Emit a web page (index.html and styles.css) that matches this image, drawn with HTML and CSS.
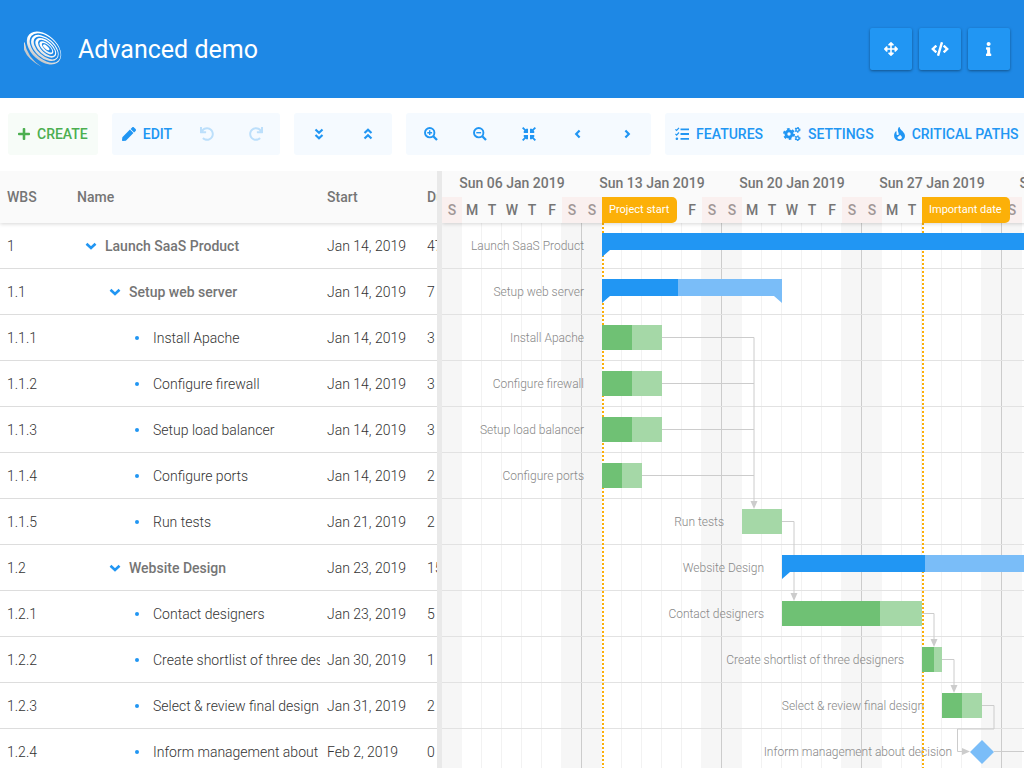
FILE: index.html
```html
<!DOCTYPE html>
<html lang="en">
<head>
<meta charset="utf-8">
<title>Advanced demo</title>
<link rel="stylesheet" href="styles.css">
</head>
<body>
<header class="topbar">
  <svg class="logo" viewBox="0 0 38 38" aria-hidden="true">
    <defs>
      <linearGradient id="silver" gradientUnits="userSpaceOnUse" x1="0" y1="-12" x2="4" y2="12">
        <stop offset="0.45" stop-color="#fff"/><stop offset="1" stop-color="#c8c8c8"/>
      </linearGradient>
    </defs>
    <g transform="translate(20 18) rotate(42)" fill="url(#silver)" fill-rule="evenodd">
      <path d="M-20 0a20 12.800 0 1 0 40 0a20 12.800 0 1 0 -40 0zM-17.500-.8a18.300 11 0 1 0 36.600 0a18.300 11 0 1 0 -36.600 0z"/>
      <path d="M-15.700-.6a16.300 9.700 0 1 0 32.600 0a16.300 9.700 0 1 0 -32.600 0zM-13.300-1.200a14.600 7.900 0 1 0 29.200 0a14.600 7.900 0 1 0 -29.200 0z"/>
      <path d="M-11.400-1.300a12.600 6.800 0 1 0 25.200 0a12.600 6.800 0 1 0 -25.200 0zM-8.700-1.800a10.600 5.100 0 1 0 21.200 0a10.600 5.100 0 1 0 -21.200 0z"/>
      <path d="M-7-1.800a8.600 4.100 0 1 0 17.200 0a8.600 4.100 0 1 0 -17.200 0zM-4.500-2.200a6.600 2.600 0 1 0 13.200 0a6.600 2.600 0 1 0 -13.200 0z"/>
      <path d="M-2.800-2a4 1.600 0 1 0 8 0a4 1.600 0 1 0 -8 0z"/>
      <path d="M-17.500 12.500Q-6 20.500 11 15.500Q-6 18.500 -18.500 8.500z"/>
    </g>
  </svg>
  <h1 class="title">Advanced demo</h1>
  <div class="actions">
    <button class="action" type="button" aria-label="Fullscreen"><svg class="icon" viewBox="0 0 512 512"><path d="M352.201 425.775l-79.196 79.196c-9.373 9.373-24.568 9.373-33.941 0l-79.196-79.196c-15.119-15.119-4.411-40.971 16.971-40.970h51.162L228 284H127.196v51.162c0 21.382-25.851 32.090-40.971 16.971L7.029 272.937c-9.373-9.373-9.373-24.569 0-33.941L86.225 159.800c15.119-15.119 40.971-4.411 40.971 16.971V228H228V127.196h-51.230c-21.382 0-32.090-25.851-16.971-40.971l79.196-79.196c9.373-9.373 24.568-9.373 33.941 0l79.196 79.196c15.119 15.119 4.411 40.971-16.971 40.971h-51.162V228h100.804v-51.162c0-21.382 25.851-32.090 40.970-16.971l79.196 79.196c9.373 9.373 9.373 24.569 0 33.941L425.773 352.200c-15.119 15.119-40.971 4.411-40.970-16.971V284H284v100.804h51.230c21.382 0 32.090 25.851 16.971 40.971z"/></svg></button>
    <button class="action" type="button" aria-label="Code editor"><svg class="icon icon-code" viewBox="0 0 640 512"><path d="M278.900 511.500l-61-17.700c-6.400-1.800-10-8.500-8.200-14.900L346.200 8.700c1.800-6.400 8.500-10 14.900-8.200l61 17.700c6.400 1.800 10 8.500 8.200 14.900L293.800 503.300c-1.900 6.400-8.500 10.100-14.900 8.200zm-114-112.200l43.500-46.400c4.600-4.900 4.300-12.700-.8-17.200L117 256l90.600-79.700c5.100-4.500 5.500-12.300.8-17.200l-43.500-46.400c-4.500-4.800-12.100-5.100-17-.5L3.800 247.200c-5.100 4.700-5.100 12.800 0 17.500l144.100 135.100c4.900 4.600 12.500 4.400 17-.5zm327.200.6l144.100-135.100c5.100-4.700 5.100-12.800 0-17.500L492.100 112.100c-4.800-4.500-12.400-4.300-17 .5L431.600 159c-4.600 4.900-4.300 12.700.8 17.200L523 256l-90.600 79.700c-5.100 4.500-5.500 12.300-.8 17.200l43.500 46.400c4.500 4.900 12.100 5.100 17 .6z"/></svg></button>
    <button class="action" type="button" aria-label="Information"><svg class="icon" viewBox="0 0 192 512"><path d="M20 424.229h20V279.771H20c-11.046 0-20-8.954-20-20V212c0-11.046 8.954-20 20-20h112c11.046 0 20 8.954 20 20v212.229h20c11.046 0 20 8.954 20 20V492c0 11.046-8.954 20-20 20H20c-11.046 0-20-8.954-20-20v-47.771c0-11.046 8.954-20 20-20zM96 0C56.235 0 24 32.235 24 72s32.235 72 72 72 72-32.235 72-72S135.764 0 96 0z"/></svg></button>
  </div>
</header>

<nav class="toolbar" aria-label="Tools">
  <div class="group group-green">
    <button class="tool" type="button"><svg class="icon icon-plus" viewBox="0 0 448 512"><path d="M416 208H272V64c0-17.670-14.330-32-32-32h-32c-17.670 0-32 14.330-32 32v144H32c-17.670 0-32 14.330-32 32v32c0 17.670 14.330 32 32 32h144v144c0 17.670 14.330 32 32 32h32c17.670 0 32-14.330 32-32V304h144c17.670 0 32-14.330 32-32v-32c0-17.670-14.330-32-32-32z"/></svg>CREATE</button>
  </div>
  <div class="group">
    <button class="tool" type="button"><svg class="icon" viewBox="0 0 512 512"><path d="M290.740 93.240l128.020 128.020-277.990 277.990-114.140 12.600C11.350 513.540-1.560 500.620.14 485.340l12.700-114.220 277.900-277.880zm207.200-19.060l-60.110-60.110c-18.750-18.750-49.160-18.750-67.910 0l-56.550 56.550 128.020 128.020 56.550-56.550c18.750-18.760 18.750-49.160 0-67.910z"/></svg>EDIT</button>
    <button class="tool tool-icon" type="button" disabled aria-label="Undo"><svg class="icon" viewBox="0 0 512 512"><path d="M212.333 224.333H12c-6.627 0-12-5.373-12-12V12C0 5.373 5.373 0 12 0h48c6.627 0 12 5.373 12 12v78.112C117.773 39.279 184.260 7.470 258.175 8.007c136.906.994 246.448 111.623 246.157 248.532C504.041 393.258 393.120 504 256.333 504c-64.089 0-122.496-24.313-166.510-64.215-5.099-4.622-5.334-12.554-.467-17.420l33.967-33.967c4.474-4.474 11.662-4.717 16.401-.525C170.760 415.336 211.580 432 256.333 432c97.268 0 176-78.716 176-176 0-97.267-78.716-176-176-176-58.496 0-110.280 28.476-142.274 72.333h98.274c6.627 0 12 5.373 12 12v48c0 6.627-5.373 12-12 12z"/></svg></button>
    <button class="tool tool-icon" type="button" disabled aria-label="Redo"><svg class="icon" viewBox="0 0 512 512"><path transform="translate(512 0) scale(-1 1)" d="M212.333 224.333H12c-6.627 0-12-5.373-12-12V12C0 5.373 5.373 0 12 0h48c6.627 0 12 5.373 12 12v78.112C117.773 39.279 184.260 7.470 258.175 8.007c136.906.994 246.448 111.623 246.157 248.532C504.041 393.258 393.120 504 256.333 504c-64.089 0-122.496-24.313-166.510-64.215-5.099-4.622-5.334-12.554-.467-17.420l33.967-33.967c4.474-4.474 11.662-4.717 16.401-.525C170.760 415.336 211.580 432 256.333 432c97.268 0 176-78.716 176-176 0-97.267-78.716-176-176-176-58.496 0-110.280 28.476-142.274 72.333h98.274c6.627 0 12 5.373 12 12v48c0 6.627-5.373 12-12 12z"/></svg></button>
  </div>
  <div class="group">
    <button class="tool tool-icon" type="button" aria-label="Expand all"><svg class="icon line" viewBox="0 0 14 14"><path d="M3.500 2.500L7 5.700l3.500-3.200M3.500 8L7 11.200 10.500 8"/></svg></button>
    <button class="tool tool-icon" type="button" aria-label="Collapse all"><svg class="icon line" viewBox="0 0 14 14"><path d="M3.500 6L7 2.800 10.500 6M3.500 11.500L7 8.300l3.500 3.200"/></svg></button>
  </div>
  <div class="group">
    <button class="tool tool-icon" type="button" aria-label="Zoom in"><svg class="icon line" viewBox="0 0 14 14"><circle cx="5.700" cy="5.700" r="4.700" stroke-width="1.900"/><path d="M9.300 9.300l3.700 3.700" stroke-width="2.300"/><path d="M3.300 5.700h4.800M5.700 3.300v4.800" stroke-width="1.400"/></svg></button>
    <button class="tool tool-icon" type="button" aria-label="Zoom out"><svg class="icon line" viewBox="0 0 14 14"><circle cx="5.700" cy="5.700" r="4.700" stroke-width="1.900"/><path d="M9.300 9.300l3.700 3.700" stroke-width="2.300"/><path d="M3.300 5.700h4.800" stroke-width="1.400"/></svg></button>
    <button class="tool tool-icon" type="button" aria-label="Zoom to fit"><svg class="icon" viewBox="0 0 14 14"><path d="M1.300 0L3.600 2.300 5 1.500 6 2V6H2L1.500 5 2.300 3.600 0 1.300zM12.700 0L10.400 2.300 9 1.500 8 2V6H12L12.500 5 11.700 3.600 14 1.300zM1.300 14L3.600 11.700 5 12.500 6 12V8H2L1.500 9 2.300 10.400 0 12.700zM12.700 14L10.400 11.700 9 12.500 8 12V8H12L12.500 9 11.700 10.400 14 12.700z"/></svg></button>
    <button class="tool tool-icon" type="button" aria-label="Previous"><svg class="icon line" viewBox="0 0 14 14"><path d="M8.600 3.500L5.200 7l3.400 3.500"/></svg></button>
    <button class="tool tool-icon" type="button" aria-label="Next"><svg class="icon line" viewBox="0 0 14 14"><path d="M5.400 3.500L8.800 7l-3.400 3.500"/></svg></button>
  </div>
  <div class="group">
    <button class="tool" type="button"><svg class="icon line" viewBox="0 0 14 14"><path stroke-width="1.800" d="M5.500 2.400H14M5.500 7H14M5.500 11.800H14"/><path stroke-width="1.200" d="M.4 2.300l1.200 1.200L4 .9M.4 6.900l1.200 1.200L4 5.500"/><circle cx="1.900" cy="11.800" r=".7" stroke-width="1.200"/></svg>FEATURES</button>
    <button class="tool" type="button"><svg class="icon icon-cogs line" viewBox="0 0 18 14"><circle cx="6" cy="7" r="3.100" stroke-width="2.800"/><circle cx="6" cy="7" r="5" stroke-width="2" stroke-dasharray="2.620 2.616"/><circle cx="14.500" cy="2.800" r="1.600" stroke-width="1.300"/><circle cx="14.500" cy="2.800" r="2.400" stroke-width="1.100" stroke-dasharray="1.260 1.253"/><circle cx="14.500" cy="11.200" r="1.600" stroke-width="1.300"/><circle cx="14.500" cy="11.200" r="2.400" stroke-width="1.100" stroke-dasharray="1.260 1.253"/></svg>SETTINGS</button>
    <button class="tool" type="button"><svg class="icon icon-fire" viewBox="0 0 11 14"><path fill-rule="evenodd" d="M5.600 0C6 3.200 11 4.800 11 9a5.400 5 0 0 1-10.900 0C0 6.700 1 5.100 1.900 4.300c.3-.2.600 0 .6.300v2.300c0 1.500 2.200 1.600 2.200 0C4.700 5 2.800 3.800 4.600.4 4.900 0 5.500-.2 5.600 0zM6 7.700C5.900 9 3.400 9.200 3.400 10.500c.1 1.300 1.200 1.800 2.300 1.700 1.300 0 2.200-.7 2.200-1.800C7.900 9.200 7 8.600 6 7.700z"/></svg>CRITICAL PATHS</button>
  </div>
</nav>

<main class="gantt">
  <section class="grid-panel" aria-label="Tasks">
    <table class="tasks">
      <colgroup><col class="col-wbs"><col class="col-name"><col class="col-start"><col class="col-duration"></colgroup>
      <thead><tr><th>WBS</th><th>Name</th><th>Start</th><th>Duration</th></tr></thead>
      <tbody>
        <tr><td>1</td><td><div class="node parent level-1"><svg class="toggle" viewBox="0 0 12 12"><path d="M1.500 3.800L6 8l4.500-4.200"/></svg>Launch SaaS Product</div></td><td>Jan 14, 2019</td><td>47 days</td></tr>
        <tr><td>1.1</td><td><div class="node parent level-2"><svg class="toggle" viewBox="0 0 12 12"><path d="M1.500 3.800L6 8l4.500-4.200"/></svg>Setup web server</div></td><td>Jan 14, 2019</td><td>7 days</td></tr>
        <tr><td>1.1.1</td><td><div class="node leaf">Install Apache</div></td><td>Jan 14, 2019</td><td>3 days</td></tr>
        <tr><td>1.1.2</td><td><div class="node leaf">Configure firewall</div></td><td>Jan 14, 2019</td><td>3 days</td></tr>
        <tr><td>1.1.3</td><td><div class="node leaf">Setup load balancer</div></td><td>Jan 14, 2019</td><td>3 days</td></tr>
        <tr><td>1.1.4</td><td><div class="node leaf">Configure ports</div></td><td>Jan 14, 2019</td><td>2 days</td></tr>
        <tr><td>1.1.5</td><td><div class="node leaf">Run tests</div></td><td>Jan 21, 2019</td><td>2 days</td></tr>
        <tr><td>1.2</td><td><div class="node parent level-2"><svg class="toggle" viewBox="0 0 12 12"><path d="M1.500 3.800L6 8l4.500-4.200"/></svg>Website Design</div></td><td>Jan 23, 2019</td><td>15 days</td></tr>
        <tr><td>1.2.1</td><td><div class="node leaf">Contact designers</div></td><td>Jan 23, 2019</td><td>5 days</td></tr>
        <tr><td>1.2.2</td><td><div class="node leaf">Create shortlist of three designers</div></td><td>Jan 30, 2019</td><td>1 day</td></tr>
        <tr><td>1.2.3</td><td><div class="node leaf">Select &amp; review final design</div></td><td>Jan 31, 2019</td><td>2 days</td></tr>
        <tr><td>1.2.4</td><td><div class="node leaf">Inform management about decision</div></td><td>Feb 2, 2019</td><td>0 days</td></tr>
      </tbody>
    </table>
  </section>
  <div class="splitter" role="separator"></div>
  <section class="timeline" aria-label="Schedule">
    <div class="time-head">
      <div class="week"><div class="week-name">Sun 06 Jan 2019</div><span class="off">S</span><span>M</span><span>T</span><span>W</span><span>T</span><span>F</span><span class="off">S</span></div>
      <div class="week"><div class="week-name">Sun 13 Jan 2019</div><span class="off">S</span><span></span><span></span><span></span><span></span><span>F</span><span class="off">S</span></div>
      <div class="week"><div class="week-name">Sun 20 Jan 2019</div><span class="off">S</span><span>M</span><span>T</span><span>W</span><span>T</span><span>F</span><span class="off">S</span></div>
      <div class="week"><div class="week-name">Sun 27 Jan 2019</div><span class="off">S</span><span>M</span><span>T</span><span></span><span></span><span></span><span class="off"></span></div>
      <div class="week"><div class="week-name">Sun 03 Feb 2019</div><span class="off">S</span><span>M</span><span>T</span><span>W</span><span>T</span><span>F</span><span class="off">S</span></div>
      <div class="flag" style="left:160px">Project start</div>
      <div class="flag" style="left:480px">Important date</div>
    </div>
    <div class="time-body">
      <div class="row"><div class="item" style="left:160px"><span class="label">Launch SaaS Product</span><div class="bar summary" style="width:940px;--done:600px"></div></div></div>
      <div class="row"><div class="item" style="left:160px"><span class="label">Setup web server</span><div class="bar summary" style="width:180px;--done:76px"></div></div></div>
      <div class="row"><div class="item" style="left:160px"><span class="label">Install Apache</span><div class="bar task" style="width:60px;--done:30px"></div></div></div>
      <div class="row"><div class="item" style="left:160px"><span class="label">Configure firewall</span><div class="bar task" style="width:60px;--done:30px"></div></div></div>
      <div class="row"><div class="item" style="left:160px"><span class="label">Setup load balancer</span><div class="bar task" style="width:60px;--done:30px"></div></div></div>
      <div class="row"><div class="item" style="left:160px"><span class="label">Configure ports</span><div class="bar task" style="width:40px;--done:20px"></div></div></div>
      <div class="row"><div class="item" style="left:300px"><span class="label">Run tests</span><div class="bar task" style="width:40px;--done:0px"></div></div></div>
      <div class="row"><div class="item" style="left:340px"><span class="label">Website Design</span><div class="bar summary" style="width:420px;--done:143px"></div></div></div>
      <div class="row"><div class="item" style="left:340px"><span class="label">Contact designers</span><div class="bar task" style="width:140px;--done:98px"></div></div></div>
      <div class="row"><div class="item" style="left:480px"><span class="label">Create shortlist of three designers</span><div class="bar task" style="width:20px;--done:12px"></div></div></div>
      <div class="row"><div class="item" style="left:500px"><span class="label">Select &amp; review final design</span><div class="bar task" style="width:40px;--done:20px"></div></div></div>
      <div class="row"><div class="item" style="left:528px"><span class="label">Inform management about decision</span><svg class="milestone" viewBox="0 0 24 24"><path d="M12 0l12 12-12 12L0 12z"/></svg></div></div>
      <svg class="links" width="700" height="552" viewBox="0 0 700 552" aria-hidden="true">
        <g class="wire">
          <path d="M220 114.500H312V279"/><path d="M220 160.500H312M220 206.500H312M200 252.500H312"/>
          <path d="M340 298.500H352V371"/><path d="M480 390.500H492V417"/><path d="M500 436.500H512V463"/>
          <path d="M540 482.500H552V506H515.500V528.500H521"/><path d="M552 528.500H700"/>
        </g>
        <path class="tip" d="M308.500 278h7l-3.500 8zM348.500 370h7l-3.500 8zM488.500 416h7l-3.500 8zM508.500 462h7l-3.500 8zM520 525v7l8-3.500z"/>
      </svg>
      <div class="marker" style="left:160px"></div>
      <div class="marker" style="left:480px"></div>
    </div>
  </section>
</main>
</body>
</html>
```
FILE: styles.css
```css
* { box-sizing: border-box; }

body {
  margin: 0;
  height: 100vh;
  display: flex;
  flex-direction: column;
  overflow: hidden;
  background: #fff;
  color: #333;
  font: 300 14px/20px Roboto, "Liberation Sans", sans-serif;
}

button {
  margin: 0;
  border: 0;
  background: none;
  color: inherit;
  font: inherit;
}

.icon { display: block; height: 14px; fill: currentColor; }
.icon.line { fill: none; stroke: currentColor; stroke-width: 2.2; }
.icon-code { width: 18px; }
.icon-plus { width: 12px; }

/* Header */
.topbar {
  flex: none;
  display: flex;
  align-items: center;
  padding: 28px 14px 28px 24px;
  background: #1e88e5;
  color: #fff;
}
.logo { width: 38px; height: 38px; margin-right: 16px; }
.title { margin: 0; padding-top: 2px; font-size: 25px; line-height: 32px; font-weight: 400; }
.actions { display: flex; gap: 7px; margin-left: auto; }
.action {
  width: 42px;
  height: 42px;
  display: flex;
  align-items: center;
  justify-content: center;
  padding: 0;
  border-radius: 2px;
  background: #2196f3;
  box-shadow: 0 1px 3px rgba(0, 0, 0, .4);
}

/* Toolbar */
.toolbar {
  flex: none;
  display: flex;
  gap: 14px;
  padding: 15px 8px 16px;
  color: #2196f3;
  font-weight: 500;
}
.group { flex: none; display: flex; border-radius: 3px; background: #f5faff; }
.group-green { background: #f7fcf8; color: #4caf50; }
.tool {
  height: 42px;
  display: flex;
  align-items: center;
  gap: 7px;
  padding: 0 10px;
  white-space: nowrap;
}
.tool-icon { width: 49px; justify-content: center; padding: 0; }
.tool:disabled { color: #bcdffb; }

/* Task table */
.gantt { flex: 1; min-height: 0; display: flex; overflow: hidden; }
.grid-panel { flex: 0 0 437px; overflow: hidden; }
.tasks { width: 520px; table-layout: fixed; border-spacing: 0; }
.col-wbs { width: 70px; }
.col-name { width: 250px; }
.col-start { width: 100px; }
.col-duration { width: 100px; }
.tasks th, .tasks td { padding: 0 0 0 7px; text-align: left; white-space: nowrap; }
.tasks th { height: 52px; background: #fafafa; color: #757575; font-weight: 500; }
.tasks thead { box-shadow: 0 1px 4px rgba(0, 0, 0, .16); }
.tasks td { height: 46px; border-bottom: 1px solid #ddd; }
.node { display: flex; align-items: center; overflow: hidden; }
.parent { gap: 8px; color: #757575; font-weight: 500; }
.level-1 { padding-left: 8px; }
.level-2 { padding-left: 32px; }
.leaf { gap: 14px; padding-left: 58px; }
.leaf::before { content: ""; flex: none; width: 4px; height: 4px; border-radius: 50%; background: #2196f3; }
.toggle { flex: none; width: 12px; height: 12px; fill: none; stroke: #2196f3; stroke-width: 2.6; }

.splitter { flex: 0 0 5px; background: #e9e9e9; z-index: 2; }

/* Schedule */
.timeline { flex: 1; min-width: 0; overflow: hidden; }
.time-head {
  position: relative;
  z-index: 4;
  display: flex;
  width: 700px;
  background: #fafafa;
  color: #757575;
  font-weight: 500;
  box-shadow: 0 1px 4px rgba(0, 0, 0, .16);
}
.week { flex: none; width: 140px; display: grid; grid-template: 26px 26px / repeat(7, 20px); text-align: center; line-height: 26px; }
.week-name { grid-column: 1 / -1; line-height: 24px; }
.off { background: #faf0ef; color: #a19796; }
.flag {
  position: absolute;
  bottom: 0;
  padding: 0 8px 0 7px;
  border-radius: 0 5px 5px 0;
  background: #fcb008;
  color: #fff;
  font-size: 11px;
  line-height: 26px;
  font-weight: 400;
}
.time-body {
  position: relative;
  width: 700px;
  background: repeating-linear-gradient(to right,
    #f6f6f6 0 20px, #fff 20px 39px, #f2f2f2 39px 40px, #fff 40px 59px, #f2f2f2 59px 60px,
    #fff 60px 79px, #f2f2f2 79px 80px, #fff 80px 99px, #f2f2f2 99px 100px, #fff 100px 119px,
    #f6f6f6 119px 139px, #ccc 139px 140px);
}
.row { position: relative; height: 46px; border-bottom: 1px solid #e2e2e2; }
.item { position: absolute; top: 10px; }
.label {
  position: absolute;
  right: 100%;
  top: 3px;
  margin-right: 18px;
  color: #888;
  font-size: 12px;
  white-space: nowrap;
}
.bar { position: relative; z-index: 3; }
.task { height: 25px; background: linear-gradient(to right, #6fc174 var(--done), #a5d8a7 var(--done)); }
.summary {
  height: 24px;
  background: linear-gradient(to right, #2196f3 var(--done), #7abdf8 var(--done));
  clip-path: polygon(0 0, 100% 0, 100% 100%, calc(100% - 8px) 17px, 8px 17px, 0 100%);
}
.milestone { position: relative; z-index: 3; display: block; width: 24px; height: 26px; fill: #7abdf8; }
.links { position: absolute; left: 0; top: 0; z-index: 1; }
.wire { fill: none; stroke: #ccc; }
.tip { fill: #ccc; }
.marker {
  position: absolute;
  top: 0;
  bottom: 0;
  z-index: 2;
  width: 2px;
  background: repeating-linear-gradient(to bottom, #fcb008 0 2px, transparent 2px 4px);
}
```
